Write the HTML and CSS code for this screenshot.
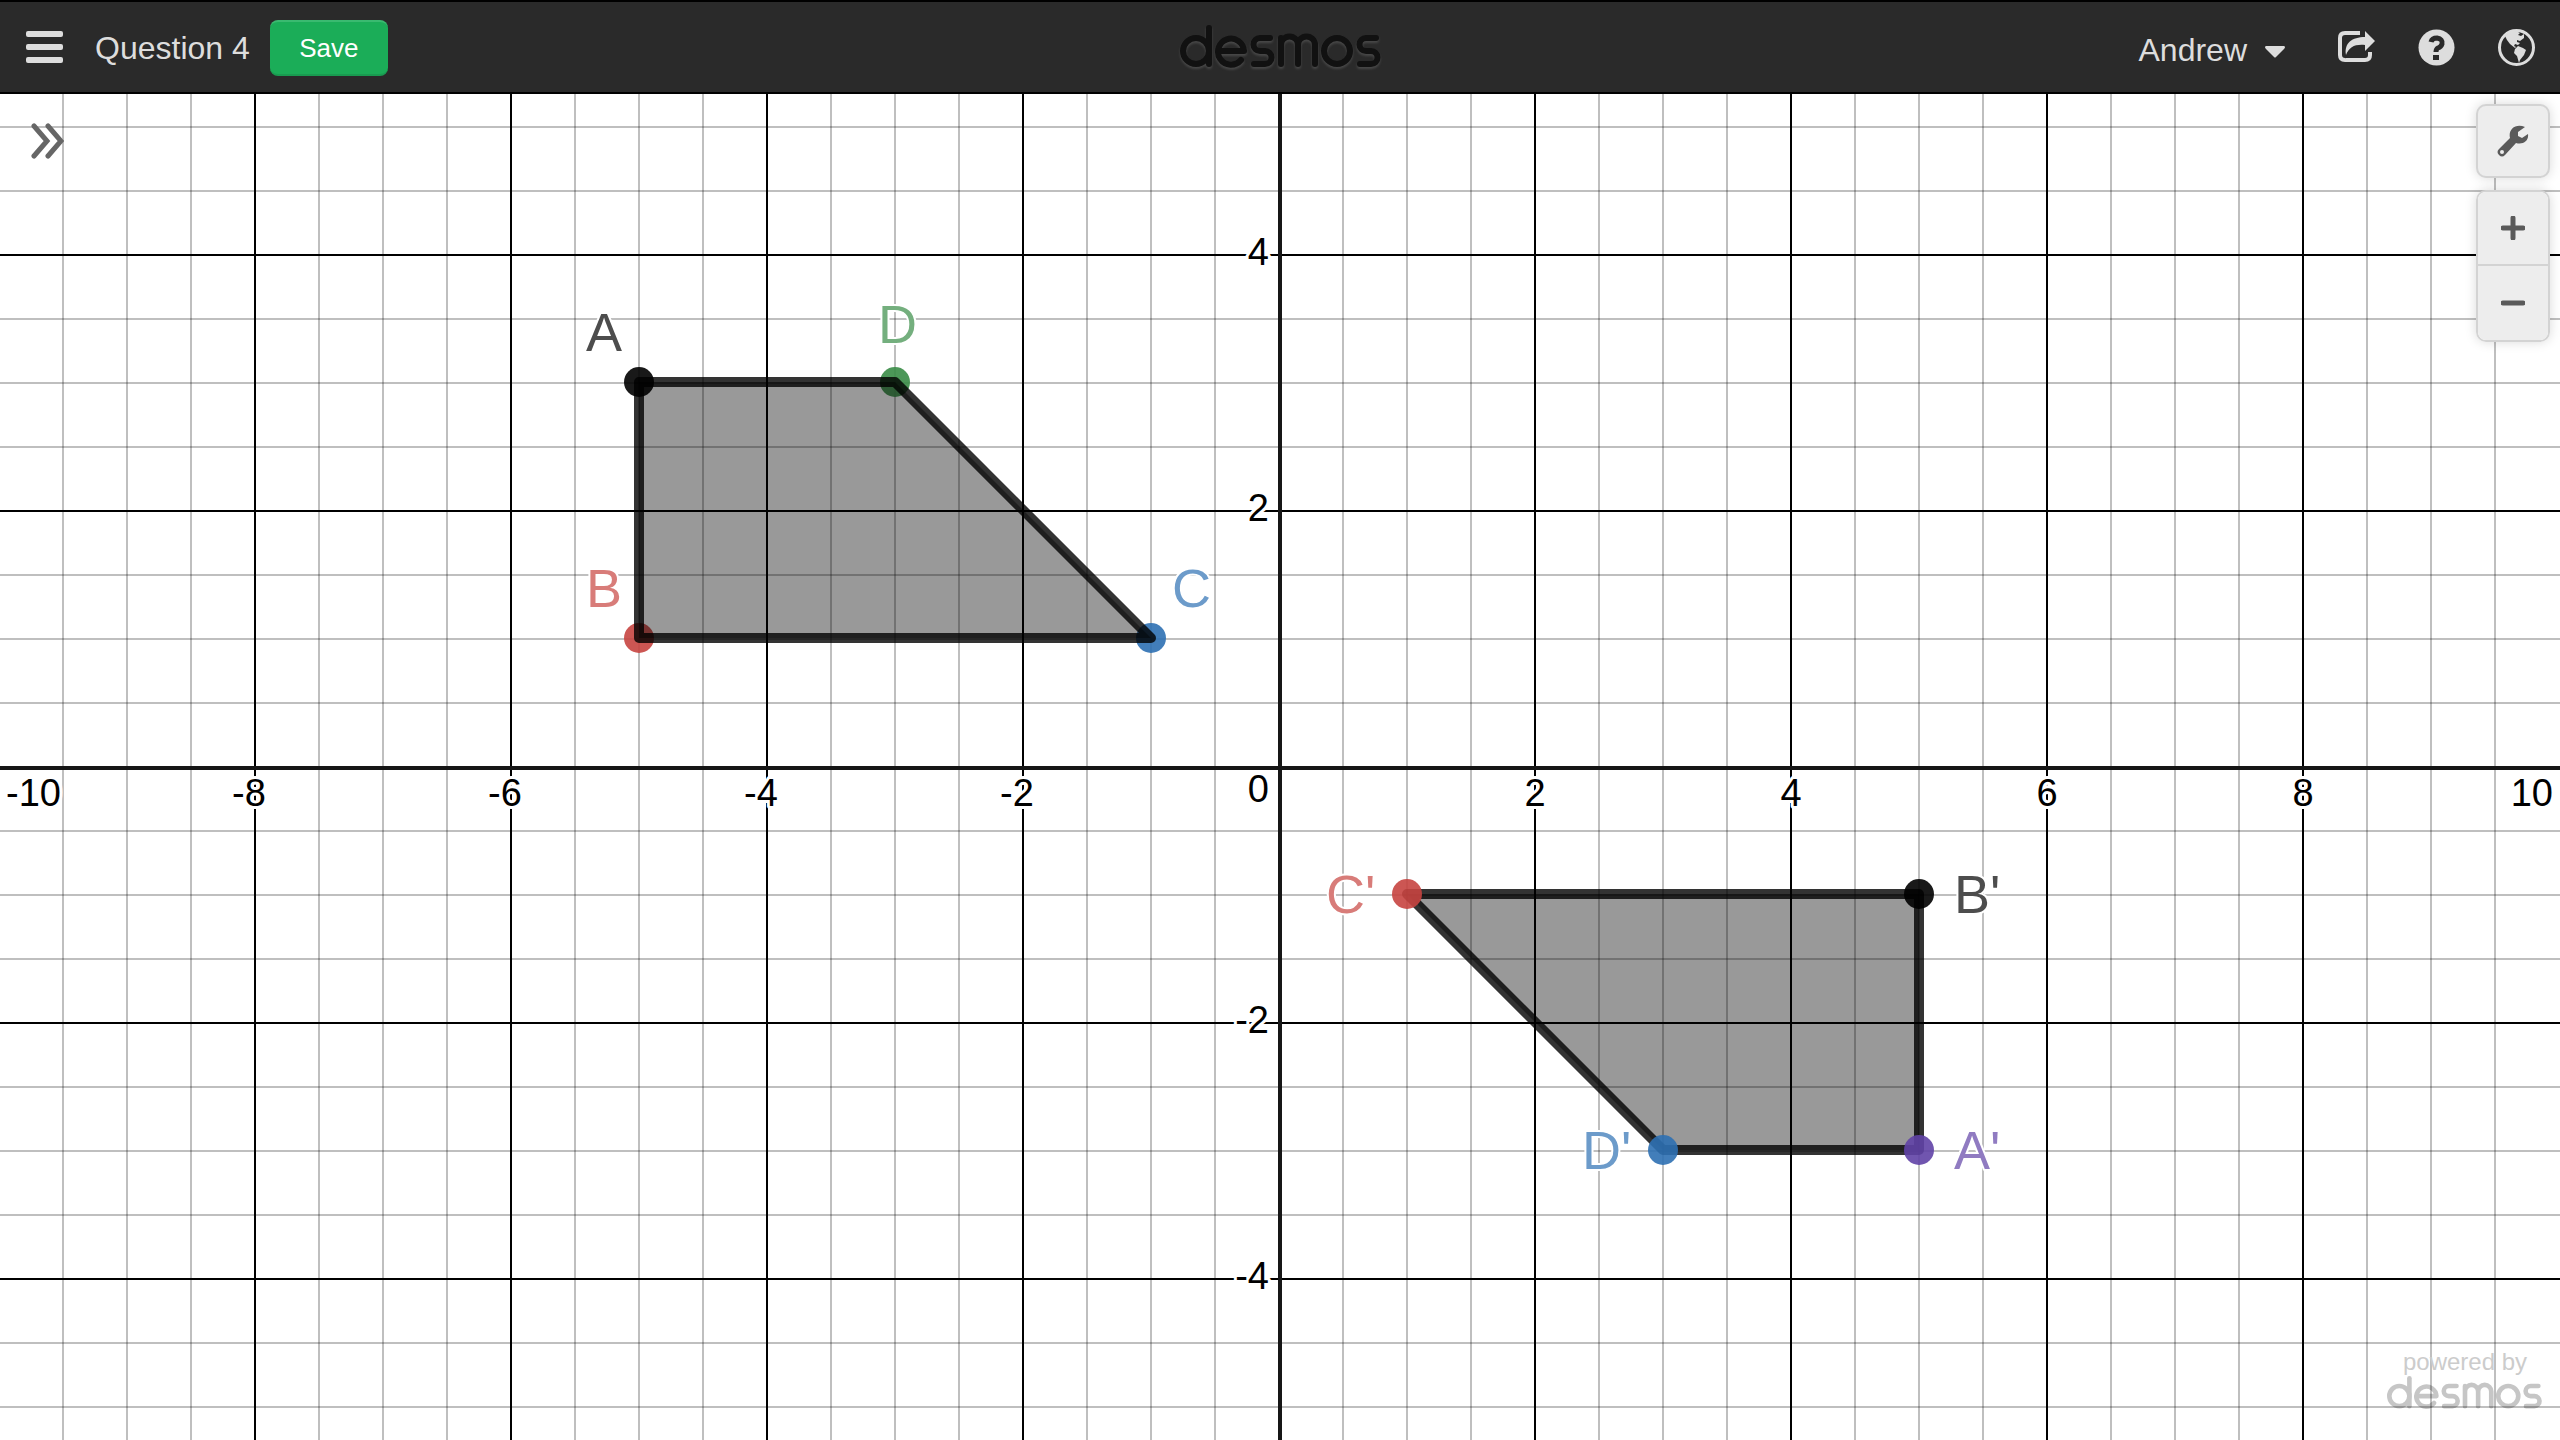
FILE: index.html
```
<!DOCTYPE html>
<html lang="en">
<head>
<meta charset="utf-8">
<title>Question 4</title>
<link rel="stylesheet" href="styles.css">
</head>
<body>
<svg width="0" height="0" class="defs" aria-hidden="true">
  <defs>
    <g id="logo" fill="none" stroke-width="6" stroke-linecap="round" stroke-linejoin="round">
      <circle cx="16" cy="26" r="13"/>
      <path d="M29 3V39"/>
      <path d="M38 26H64A13 13 0 1 0 61 35"/>
      <path d="M90 13H80A6.500 6.500 0 0 0 80 26H85A6.500 6.500 0 0 1 85 39H74"/>
      <path d="M101 39V13M101 20A8.500 8.500 0 0 1 118 20V39M118 20A8.500 8.500 0 0 1 135 20V39"/>
      <circle cx="157" cy="26" r="13"/>
      <path d="M196 13H186A6.500 6.500 0 0 0 186 26H191A6.500 6.500 0 0 1 191 39H180"/>
    </g>
  </defs>
</svg>
<header class="header">
  <div class="header-side">
    <button class="icon-button" aria-label="Open menu">
      <svg width="37" height="32" viewBox="0 0 37 32"><g fill="#ddd"><rect width="37" height="6" rx="2"/><rect y="13" width="37" height="6" rx="2"/><rect y="26" width="37" height="6" rx="2"/></g></svg>
    </button>
    <h1 class="title">Question 4</h1>
    <button class="save">Save</button>
  </div>
  <svg class="brand" width="202" height="44" viewBox="0 0 202 44" role="img" aria-label="desmos"><use href="#logo"/></svg>
  <div class="header-side header-right">
    <button class="account">Andrew
      <svg width="20" height="12" viewBox="0 0 20 12"><path d="M1 0H19Q21 1 19 3L11 11Q10 12 9 11L1 3Q-1 1 1 0Z" fill="#ddd"/></svg>
    </button>
    <button class="icon-button" aria-label="Share">
      <svg width="37" height="32" viewBox="0 0 37 32"><path d="M22 2H7Q2 2 2 7V24Q2 29 7 29H27Q32 29 32 24V21" fill="none" stroke="#ddd" stroke-width="4"/><path d="M27 0L37 10L27 20V14C17 13 11 16 8 24C6 12 14 6 27 6Z" fill="#ddd" stroke="#2a2a2a" stroke-width="2" paint-order="stroke"/></svg>
    </button>
    <button class="icon-button" aria-label="Help">
      <svg width="37" height="37" viewBox="0 0 37 37"><circle cx="18.500" cy="18.500" r="18" fill="#ddd"/><path d="M13 13Q14 9 19 9Q25 10 24 15Q23 18 20 19Q18 20 18 23" fill="none" stroke="#2a2a2a" stroke-width="5"/><path d="M15 26H21V31H15Z" fill="#2a2a2a"/></svg>
    </button>
    <button class="icon-button" aria-label="Language">
      <svg width="37" height="37" viewBox="0 0 37 37"><circle cx="18.500" cy="18.500" r="17" fill="none" stroke="#ddd" stroke-width="3"/><path d="M7 7L12 3L18 2L22 4L20 6L23 7L26 5L26 9L22 12L19 11L19 13L22 14L20 16L17 15L16 17L18 18L17 19L12 15L9 11Z" fill="#ddd"/><path d="M17 20L20 17L25 19L28 21L26 26L22 31L21 34L19 27L16 24Z" fill="#ddd"/></svg>
    </button>
  </div>
</header>
<main class="graph">
  <svg class="plot" viewBox="0 94 2560 1346" preserveAspectRatio="xMidYMid slice">
    <defs>
      <pattern id="rows" x="1278" y="766" width="64" height="64" patternUnits="userSpaceOnUse">
        <path d="M0 0H64V2H0Z" fill-opacity=".25"/>
      </pattern>
      <pattern id="columns" x="1278" y="766" width="64" height="64" patternUnits="userSpaceOnUse">
        <path d="M0 0H2V64H0Z" fill-opacity=".25"/>
      </pattern>
      <pattern id="major-rows" x="1278" y="766" width="256" height="256" patternUnits="userSpaceOnUse">
        <path d="M0 0H256V2H0Z"/>
      </pattern>
      <pattern id="major-columns" x="1278" y="766" width="256" height="256" patternUnits="userSpaceOnUse">
        <path d="M0 0H2V256H0Z"/>
      </pattern>
    </defs>
    <rect y="94" width="2560" height="1346" fill="url(#rows)"/>
    <rect y="94" width="2550" height="1346" fill="url(#columns)"/>
    <rect y="94" width="2560" height="1346" fill="url(#major-rows)"/>
    <rect y="94" width="2550" height="1346" fill="url(#major-columns)"/>
    <path d="M0 768H2560M1280 94V1440" stroke="#161616" stroke-width="4"/>
    <g class="axis-label">
      <text x="6" y="806">-10</text>
      <text x="249" y="806" text-anchor="middle">-8</text>
      <text x="505" y="806" text-anchor="middle">-6</text>
      <text x="761" y="806" text-anchor="middle">-4</text>
      <text x="1017" y="806" text-anchor="middle">-2</text>
      <text x="1269" y="802" text-anchor="end">0</text>
      <text x="1535" y="806" text-anchor="middle">2</text>
      <text x="1791" y="806" text-anchor="middle">4</text>
      <text x="2047" y="806" text-anchor="middle">6</text>
      <text x="2303" y="806" text-anchor="middle">8</text>
      <text x="2553" y="806" text-anchor="end">10</text>
      <text x="1269" y="265" text-anchor="end">4</text>
      <text x="1269" y="521" text-anchor="end">2</text>
      <text x="1269" y="1033" text-anchor="end">-2</text>
      <text x="1269" y="1289" text-anchor="end">-4</text>
    </g>
    <g fill-opacity=".9">
      <circle cx="639" cy="382" r="15" fill="#000"/>
      <circle cx="639" cy="638" r="15" fill="#c74440"/>
      <circle cx="1151" cy="638" r="15" fill="#2d70b3"/>
      <circle cx="895" cy="382" r="15" fill="#388c46"/>
    </g>
    <g class="shape">
      <path d="M639 382V638H1151L895 382Z"/>
      <path d="M1407 894H1919V1150H1663Z"/>
    </g>
    <g fill-opacity=".9">
      <circle cx="1919" cy="894" r="15" fill="#000"/>
      <circle cx="1407" cy="894" r="15" fill="#c74440"/>
      <circle cx="1663" cy="1150" r="15" fill="#2d70b3"/>
      <circle cx="1919" cy="1150" r="15" fill="#6042a6"/>
    </g>
    <g class="point-label">
      <text x="586" y="351" fill="#4d4d4d">A</text>
      <text x="586" y="607" fill="#d87c79">B</text>
      <text x="1172" y="607" fill="#6c9bca">C</text>
      <text x="878" y="343" fill="#74af7e">D</text>
      <text x="1326" y="913" fill="#d87c79">C'</text>
      <text x="1582" y="1169" fill="#6c9bca">D'</text>
      <text x="1954" y="913" fill="#4d4d4d">B'</text>
      <text x="1954" y="1169" fill="#907bc1">A'</text>
    </g>
  </svg>
  <button class="expand" aria-label="Show expression list">
    <svg width="34" height="36" viewBox="0 0 34 36"><path d="M4 3L17 18L4 33M18 3L31 18L18 33" fill="none" stroke="#666" stroke-width="5" stroke-linecap="round" stroke-linejoin="miter"/></svg>
  </button>
  <div class="tools">
    <button class="tool" aria-label="Graph settings">
      <svg width="34" height="34" viewBox="0 0 34 34"><path d="M3 25L14 14C12 6 19-1 29 3L22 8V12L26 14L32 10C33 17 27 21 20 19L9 31Q6 34 3 31Q0 28 3 25ZM6 26A2 2 0 1 0 6 30A2 2 0 1 0 6 26Z" fill="#5a5a5a" fill-rule="evenodd"/></svg>
    </button>
    <div class="zoom">
      <button class="tool" aria-label="Zoom in"><svg width="24" height="24" viewBox="0 0 24 24"><path d="M2 12H22M12 2V22" stroke="#5a5a5a" stroke-width="5" stroke-linecap="round"/></svg></button>
      <button class="tool" aria-label="Zoom out"><svg width="24" height="24" viewBox="0 0 24 24"><path d="M2 12H22" stroke="#5a5a5a" stroke-width="5" stroke-linecap="round"/></svg></button>
    </div>
  </div>
  <a class="powered" href="#">powered by
    <svg width="156" height="34" viewBox="0 0 202 44" role="img" aria-label="desmos"><use href="#logo"/></svg>
  </a>
</main>
</body>
</html>
```
FILE: styles.css
```
* { box-sizing: border-box; }
body {
  margin: 0;
  min-height: 100vh;
  display: flex;
  flex-direction: column;
  font-family: "Liberation Sans", Arial, sans-serif;
  background: #fff;
}
.defs { position: absolute; }
button {
  font: inherit;
  color: inherit;
  border: 0;
  padding: 0;
  background: none;
  cursor: pointer;
}
svg { display: block; }
.header {
  display: flex;
  align-items: center;
  height: 94px;
  padding: 0 25px 0 26px;
  background: #2a2a2a;
  border-top: 2px solid #000;
  border-bottom: 2px solid #000;
  color: #ddd;
}
.header-side {
  flex: 1;
  display: flex;
  align-items: center;
}
.header-right {
  justify-content: flex-end;
  gap: 43px;
}
.title {
  margin: 2px 20px 0 32px;
  font-size: 32px;
  font-weight: 400;
  line-height: 40px;
}
.save {
  width: 118px;
  height: 56px;
  margin-top: 2px;
  border-radius: 8px;
  background: #1bad58;
  border-top: 2px solid #3aba70;
  border-bottom: 2px solid #199b50;
  color: #fff;
  font-size: 26px;
}
.brand {
  stroke: #111;
  filter: drop-shadow(0 2px 1px #484848);
}
.account {
  display: flex;
  align-items: center;
  gap: 18px;
  margin-right: 10px;
  padding-top: 6px;
  font-size: 32px;
  line-height: 40px;
}
.account svg { margin-top: 4px; }
.graph {
  flex: 1;
  position: relative;
  display: flex;
  overflow: hidden;
}
.plot {
  width: 100%;
  height: auto;
  flex: 1;
}
.axis-label {
  font-size: 38px;
  fill: #000;
  stroke: #fff;
  stroke-width: 6px;
  stroke-linejoin: round;
  paint-order: stroke;
}
.point-label {
  font-size: 54px;
  stroke: #fff;
  stroke-width: 4px;
  stroke-linejoin: round;
  paint-order: stroke;
}
.shape {
  fill: #000;
  fill-opacity: .4;
  stroke: #000;
  stroke-opacity: .8;
  stroke-width: 10px;
  stroke-linejoin: round;
}
.expand {
  position: absolute;
  left: 30px;
  top: 29px;
}
.tools {
  position: absolute;
  top: 10px;
  right: 10px;
  width: 74px;
  display: flex;
  flex-direction: column;
  gap: 12px;
}
.tool {
  display: flex;
  align-items: center;
  justify-content: center;
  height: 74px;
  background: #ededed;
  border: 2px solid #d3d3d3;
  border-radius: 10px;
  box-shadow: 0 0 12px rgba(0, 0, 0, .15);
}
.zoom {
  display: flex;
  flex-direction: column;
  border: 2px solid #d3d3d3;
  border-radius: 10px;
  overflow: hidden;
  box-shadow: 0 0 12px rgba(0, 0, 0, .15);
}
.zoom .tool {
  height: 72px;
  border: 0;
  border-radius: 0;
  box-shadow: none;
}
.zoom .tool + .tool {
  height: 76px;
  border-top: 2px solid #d3d3d3;
}
.powered {
  position: absolute;
  right: 17px;
  bottom: 30px;
  display: flex;
  flex-direction: column;
  align-items: center;
  color: #ccc;
  font-size: 24px;
  line-height: 28px;
  text-decoration: none;
}
.powered svg { stroke: #000; opacity: .22; }
```
